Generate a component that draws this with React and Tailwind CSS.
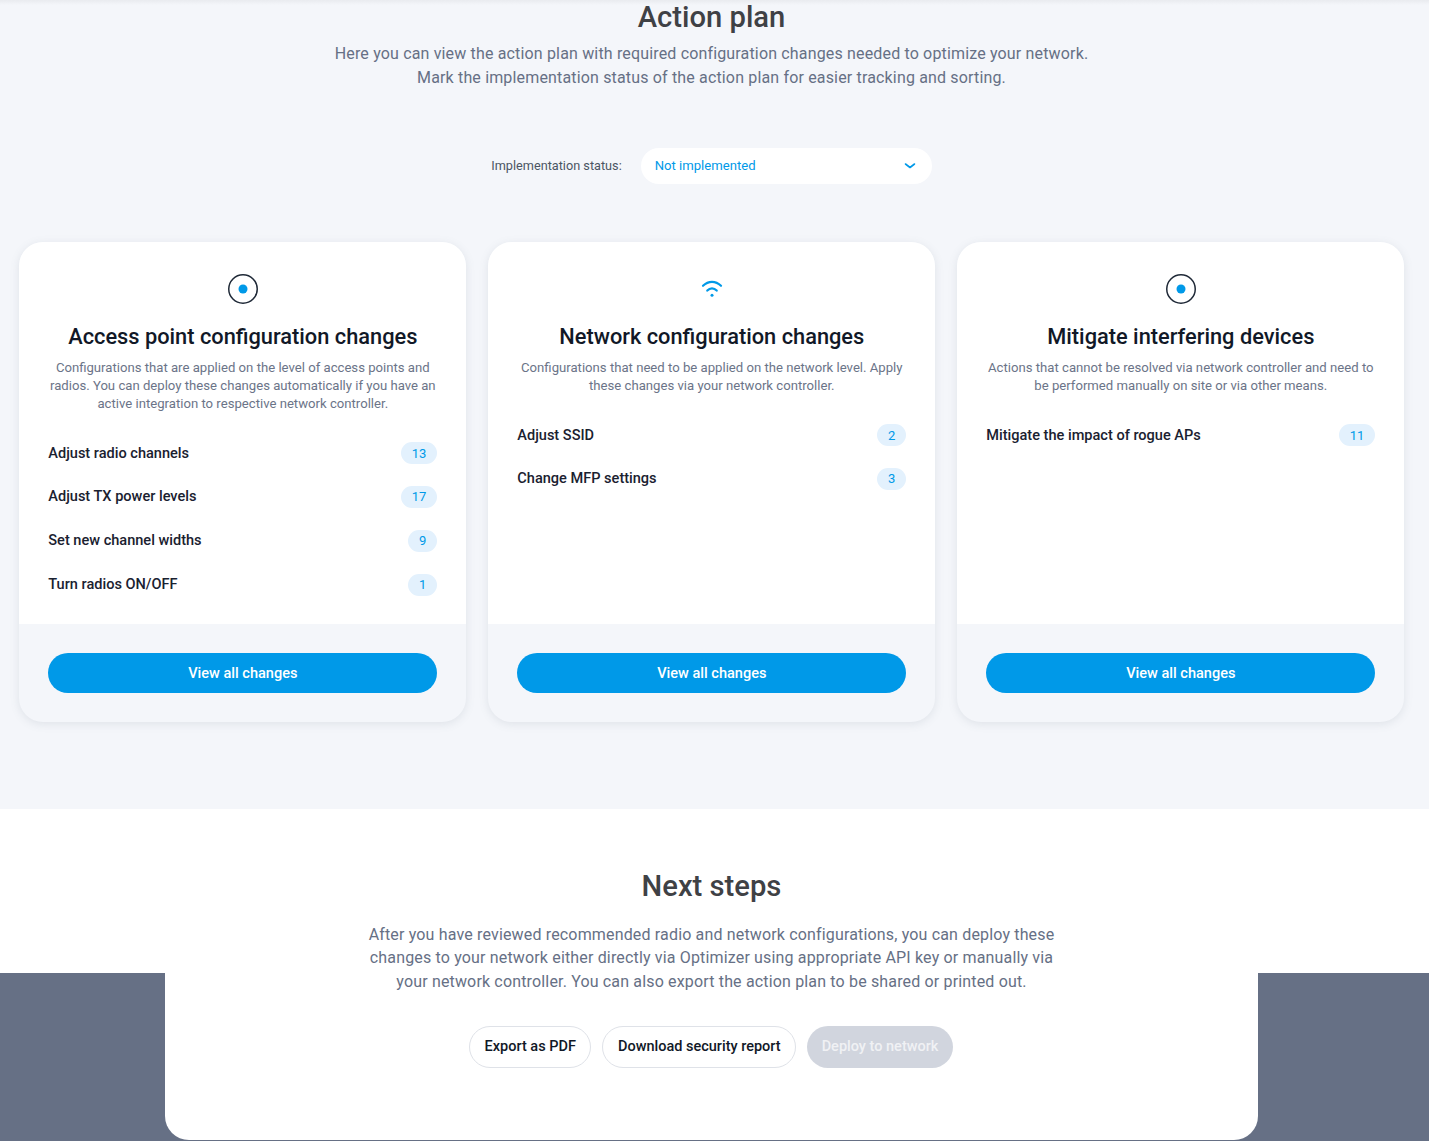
import React from "react";

const CARDS = [
  {
    icon: "radio",
    title: "Access point configuration changes",
    text: "Configurations that are applied on the level of access points and radios. You can deploy these changes automatically if you have an active integration to respective network controller.",
    items: [
      ["Adjust radio channels", 13],
      ["Adjust TX power levels", 17],
      ["Set new channel widths", 9],
      ["Turn radios ON/OFF", 1],
    ],
  },
  {
    icon: "wifi",
    title: "Network configuration changes",
    text: "Configurations that need to be applied on the network level. Apply these changes via your network controller.",
    items: [
      ["Adjust SSID", 2],
      ["Change MFP settings", 3],
    ],
  },
  {
    icon: "radio",
    title: "Mitigate interfering devices",
    text: "Actions that cannot be resolved via network controller and need to be performed manually on site or via other means.",
    items: [["Mitigate the impact of rogue APs", 11]],
  },
];

const RadioIcon = () => (
  <svg width="32" height="32" viewBox="0 0 32 32" fill="none">
    <circle cx="16" cy="16" r="14.25" stroke="#1f2937" strokeWidth="1.5" />
    <circle cx="16" cy="16" r="4.5" fill="#0099e8" />
  </svg>
);

const WifiIcon = () => (
  <svg width="32" height="32" viewBox="0 0 32 32" fill="none">
    <path d="M7 12.8c5.4-5.3 12.6-5.3 18 0" stroke="#0099e8" strokeWidth="2.2" strokeLinecap="round" />
    <path d="M11.3 17.6c2.7-2.9 6.7-2.9 9.4 0" stroke="#0099e8" strokeWidth="2.2" strokeLinecap="round" />
    <circle cx="16" cy="22.2" r="1.5" fill="#0099e8" />
  </svg>
);

const Card = ({ card }) => (
  <div className="flex flex-col h-[480px] rounded-3xl bg-[#f4f6fa] overflow-hidden shadow-[0_2px_10px_rgba(100,112,130,0.14)]">
    <div className="flex-1 bg-white px-[29px] pt-[31px]">
      <div className="flex justify-center">
        {card.icon === "wifi" ? <WifiIcon /> : <RadioIcon />}
      </div>
      <h3 className="mt-[16px] text-center text-[21.8px] leading-[32px] font-medium text-[#111827]">{card.title}</h3>
      <p className="mt-[5.6px] text-center text-[13.15px] leading-[18px] text-[#6b7488]">{card.text}</p>
      <div className="mt-[29.9px]">
        {card.items.map(([label, count]) => (
          <div key={label} className="flex items-center justify-between h-[22px] mb-[21.7px]">
            <span className="text-[14.55px] font-medium text-[#1a2130]">{label}</span>
            <span className="min-w-[29px] px-[11px] h-[22px] flex items-center justify-center rounded-full bg-[#e3f1fd] text-[13px] text-[#0099e8]">{count}</span>
          </div>
        ))}
      </div>
    </div>
    <div className="h-[98px] px-[29px] pt-[29px]">
      <button className="w-full h-[40px] pt-px rounded-full bg-[#0099e8] text-[14.55px] font-medium text-white">View all changes</button>
    </div>
  </div>
);

export default function App() {
  return (
    <div className="font-['Roboto',sans-serif]">
      <section className="relative h-[809px] bg-[#f4f6fa] pr-[6px] text-center">
        <div className="absolute inset-x-0 top-0 h-[5px] bg-gradient-to-b from-[#e9ebef] to-[#f4f6fa]" />
        <h1 className="relative text-[29.2px] leading-[34px] font-medium text-[#3f4145]">Action plan</h1>
        <p className="mt-[8.4px] text-[16px] tracking-[0.01em] leading-[23.5px] text-[#667085]">
          Here you can view the action plan with required configuration changes needed to optimize your network.
          <br />
          Mark the implementation status of the action plan for easier tracking and sorting.
        </p>
        <div className="mt-[58.6px] flex items-center justify-center gap-[19px]">
          <span className="text-[12.7px] text-[#4b5563]">Implementation status:</span>
          <div className="flex items-center justify-between w-[291px] h-[36px] rounded-full bg-white pl-[14px] pr-[15px]">
            <span className="text-[13.12px] text-[#0099e8]">Not implemented</span>
            <svg width="14" height="14" viewBox="0 0 14 14" fill="none">
              <path d="M2.5 5l4.5 3.5L11.5 5" stroke="#0099e8" strokeWidth="1.6" strokeLinecap="round" strokeLinejoin="round" />
            </svg>
          </div>
        </div>
        <div className="mt-[58px] grid grid-cols-[447px_447px_447px] gap-[22px] pl-[19.3px] text-left">
          {CARDS.map((card) => (
            <Card key={card.title} card={card} />
          ))}
        </div>
      </section>

      <section className="bg-[linear-gradient(#ffffff_164px,#667085_164px)] pb-px">
        <div className="w-[1093px] h-[331px] ml-[165px] rounded-b-3xl bg-white pt-[58px] text-center">
          <h2 className="text-[29.2px] leading-[38px] font-medium text-[#3f4145]">Next steps</h2>
          <p className="mt-[17.6px] text-[16px] tracking-[0.01em] leading-[23.5px] text-[#667085]">
            After you have reviewed recommended radio and network configurations, you can deploy these
            <br />
            changes to your network either directly via Optimizer using appropriate API key or manually via
            <br />
            your network controller. You can also export the action plan to be shared or printed out.
          </p>
          <div className="mt-[33px] flex justify-center gap-[11px] pr-px">
            <button className="h-[42px] px-[14.5px] rounded-full border border-[#dfe2e8] bg-white text-[14.5px] font-medium text-[#111827]">Export as PDF</button>
            <button className="h-[42px] px-[14.5px] rounded-full border border-[#dfe2e8] bg-white text-[14.5px] font-medium text-[#111827]">Download security report</button>
            <button className="h-[42px] px-[14.5px] rounded-full bg-[#d1d5de] text-[14.5px] font-medium text-white/70">Deploy to network</button>
          </div>
        </div>
      </section>
    </div>
  );
}
